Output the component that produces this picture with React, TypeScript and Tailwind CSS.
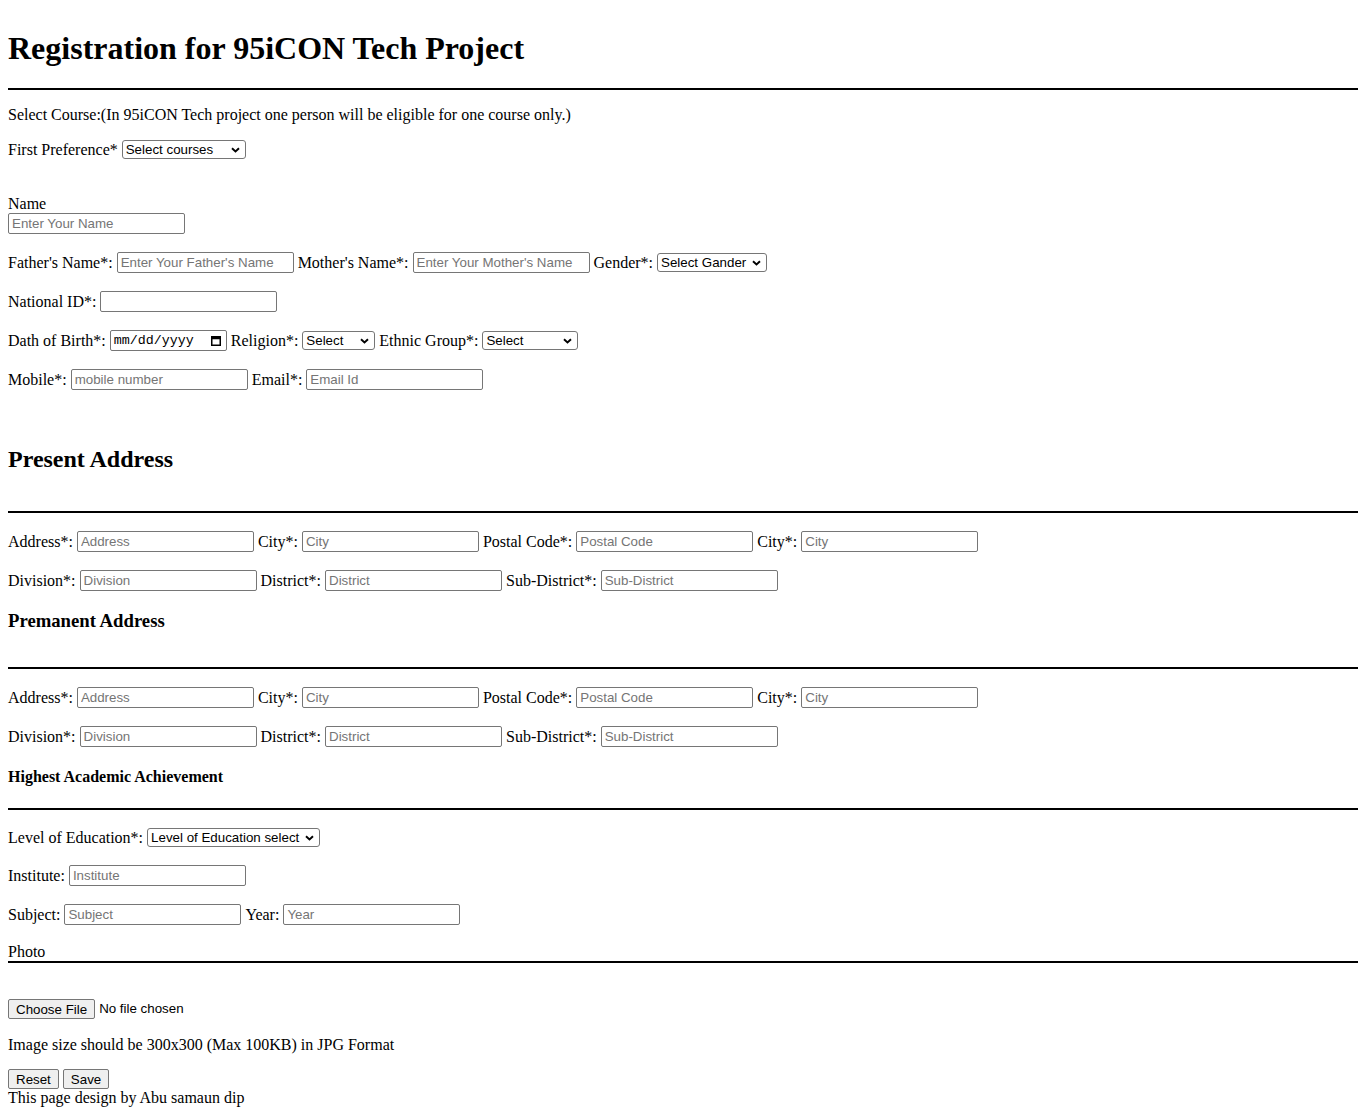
import React from "react";

const serif = "font-['Liberation_Serif','Times_New_Roman',serif]";
const sans = "font-['Liberation_Sans',Arial,sans-serif]";

const Field = ({ ph = "", w = "w-[177px]" }: { ph?: string; w?: string }) => (
  <input
    type="text"
    placeholder={ph}
    className={`${w} h-[21px] shrink-0 border border-[#767676] rounded-[2px] bg-white px-[3px] text-[13.33px] text-black placeholder:text-[#757575] ${sans}`}
  />
);

const Select = ({ text, w }: { text: string; w: string }) => (
  <span className="relative inline-flex shrink-0">
    <select
      className={`${w} h-[19px] appearance-none border border-[#767676] rounded-[3px] bg-white pl-[3px] text-[13.33px] leading-[17px] text-black ${sans}`}
    >
      <option>{text}</option>
    </select>
    <svg
      className="pointer-events-none absolute right-[6px] top-[7px]"
      width="9"
      height="6"
      viewBox="0 0 9 6"
    >
      <path d="M1 1.2l3.5 3.3L8 1.2" stroke="black" strokeWidth="1.9" fill="none" />
    </svg>
  </span>
);

const Row = ({ mt, children }: { mt: string; children: React.ReactNode }) => (
  <div className={`${mt} flex h-[21px] items-center gap-[4px] whitespace-nowrap`}>{children}</div>
);

const Hr = ({ mt }: { mt: string }) => <div className={`${mt} h-[2px] w-full bg-black`} />;

const Btn = ({ children }: { children: React.ReactNode }) => (
  <button
    type="button"
    className={`h-[20px] shrink-0 border border-[#767676] rounded-[2px] bg-[#efefef] px-[7px] text-[13.33px] text-black ${sans}`}
  >
    {children}
  </button>
);

const AddressBlock = () => (
  <>
    <Row mt="mt-[18px]">
      <span>Address*:</span>
      <Field ph="Address" />
      <span>City*:</span>
      <Field ph="City" />
      <span>Postal Code*:</span>
      <Field ph="Postal Code" />
      <span>City*:</span>
      <Field ph="City" />
    </Row>
    <Row mt="mt-[18px]">
      <span>Division*:</span>
      <Field ph="Division" />
      <span>District*:</span>
      <Field ph="District" />
      <span>Sub-District*:</span>
      <Field ph="Sub-District" />
    </Row>
  </>
);

export default function App() {
  return (
    <div className={`min-h-screen bg-white px-2 text-[16px] text-black ${serif}`}>
      <h1 className="pt-[30px] h-[66px] text-[32px] font-bold leading-[36px]">
        Registration for 95iCON Tech Project
      </h1>
      <Hr mt="mt-[22px]" />
      <p className="mt-[15px] h-[20px] leading-[20px]">
        Select Course:(In 95iCON Tech project one person will be eligible for one course only.)
      </p>
      <Row mt="mt-[14px]">
        <span>First Preference*</span>
        <Select text="Select courses" w="w-[124px]" />
      </Row>

      <p className="mt-[34px] h-[19px] leading-[20px]">Name</p>
      <div className="flex">
        <Field ph="Enter Your Name" />
      </div>
      <Row mt="mt-[18px]">
        <span>Father's Name*:</span>
        <Field ph="Enter Your Father's Name" />
        <span>Mother's Name*:</span>
        <Field ph="Enter Your Mother's Name" />
        <span>Gender*:</span>
        <Select text="Select Gander" w="w-[110px]" />
      </Row>
      <Row mt="mt-[18px]">
        <span>National ID*:</span>
        <Field />
      </Row>
      <Row mt="mt-[18px]">
        <span>Dath of Birth*:</span>
        <span className="relative flex h-[21px] w-[117px] shrink-0 items-center border border-[#767676] rounded-[2px] bg-white pl-[3px]">
          <span className="font-['Liberation_Mono',monospace] text-[13.33px] leading-none text-black">
            mm/dd/yyyy
          </span>
          <svg className="absolute right-[5px] top-[5px]" width="10" height="10" viewBox="0 0 10 10">
            <rect x="0.75" y="0.75" width="8.5" height="8.5" fill="none" stroke="black" strokeWidth="1.5" />
            <rect x="0.75" y="0.75" width="8.5" height="2.5" fill="black" />
          </svg>
        </span>
        <span>Religion*:</span>
        <Select text="Select" w="w-[73px]" />
        <span>Ethnic Group*:</span>
        <Select text="Select" w="w-[96px]" />
      </Row>
      <Row mt="mt-[18px]">
        <span>Mobile*:</span>
        <Field ph="mobile number" />
        <span>Email*:</span>
        <Field ph="Email Id" />
      </Row>

      <h2 className="mt-[55px] h-[28px] text-[24px] font-bold leading-[28px]">Present Address</h2>
      <Hr mt="mt-[38px]" />
      <AddressBlock />

      <h3 className="mt-[19px] h-[22px] text-[18.72px] font-bold leading-[22px]">Premanent Address</h3>
      <Hr mt="mt-[35px]" />
      <AddressBlock />

      <h4 className="mt-[20px] h-[20px] text-[16px] font-bold leading-[20px]">Highest Academic Achievement</h4>
      <Hr mt="mt-[21px]" />
      <Row mt="mt-[17px]">
        <span>Level of Education*:</span>
        <Select text="Level of Education select" w="w-[173px]" />
      </Row>
      <Row mt="mt-[17px]">
        <span>Institute:</span>
        <Field ph="Institute" />
      </Row>
      <Row mt="mt-[18px]">
        <span>Subject:</span>
        <Field ph="Subject" />
        <span>Year:</span>
        <Field ph="Year" />
      </Row>
      <p className="mt-[17px] h-[19px] leading-[20px]">Photo</p>
      <Hr mt="mt-0" />

      <div className="mt-[36px] flex h-[20px] items-center gap-[4px]">
        <Btn>Choose File</Btn>
        <span className={`text-[13.33px] ${sans}`}>No file chosen</span>
      </div>
      <p className="mt-[16px] h-[20px] leading-[20px]">
        Image size should be 300x300 (Max 100KB) in JPG Format
      </p>
      <div className="mt-[14px] flex h-[20px] items-center gap-[4px]">
        <Btn>Reset</Btn>
        <Btn>Save</Btn>
      </div>
      <p className="h-[18px] leading-[18px]">This page design by Abu samaun dip</p>
    </div>
  );
}
